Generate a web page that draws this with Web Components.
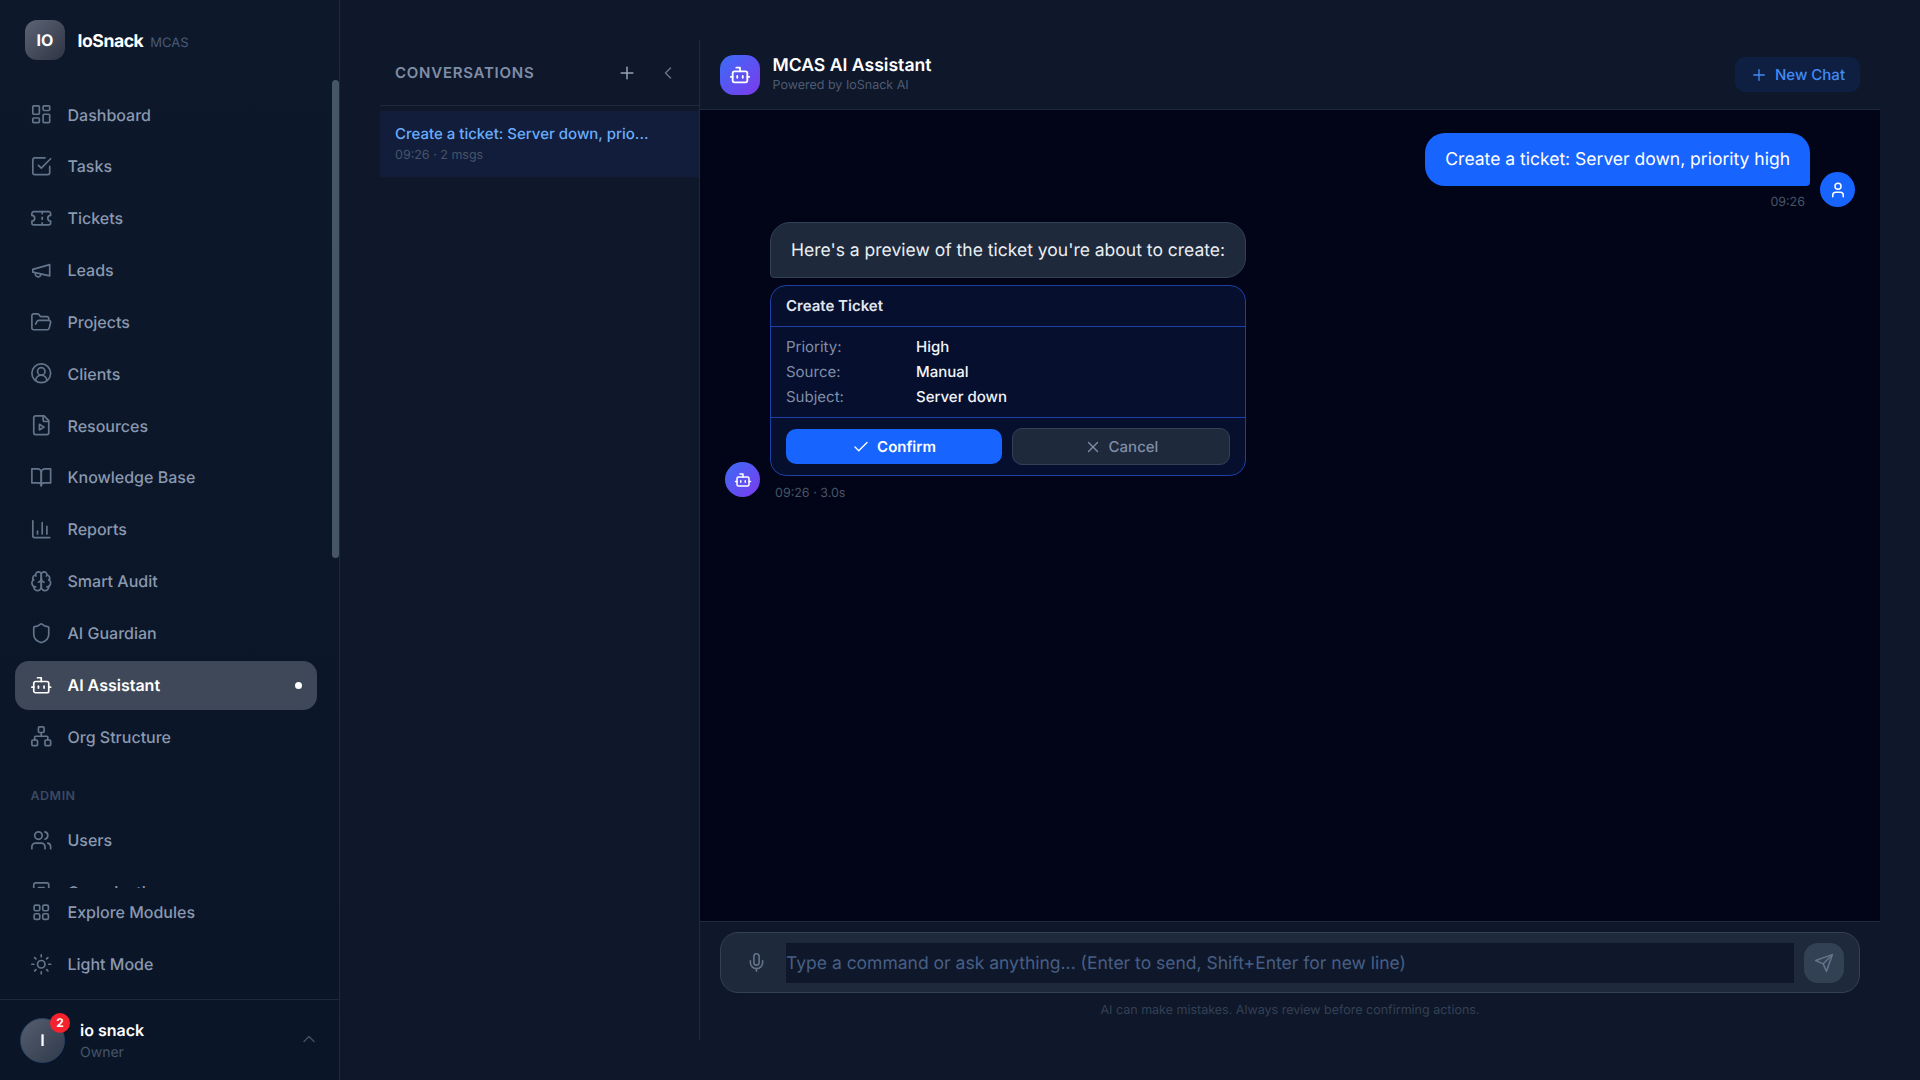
<!DOCTYPE html>
<html lang="en">
<head>
<meta charset="utf-8">
<title>MCAS AI Assistant</title>
<style>
  html, body { margin: 0; height: 100%; background: #0f172a; overflow: hidden; }
  body { font-family: Inter, "Noto Sans", sans-serif; display: flex; width: 1920px; height: 1080px; text-rendering: geometricPrecision; }
</style>
</head>
<body>
<app-sidebar></app-sidebar>
<chat-page></chat-page>

<script>
// Lucide style icon paths, by name
const ICONS = {
  dashboard: '<rect x="3" y="3" width="7" height="9" rx="1"/><rect x="14" y="3" width="7" height="5" rx="1"/><rect x="14" y="12" width="7" height="9" rx="1"/><rect x="3" y="16" width="7" height="5" rx="1"/>',
  tasks: '<path d="m9 11 3 3L22 4"/><path d="M21 12v7a2 2 0 0 1-2 2H5a2 2 0 0 1-2-2V5a2 2 0 0 1 2-2h11"/>',
  ticket: '<path d="M2 9a3 3 0 0 1 0 6v2a2 2 0 0 0 2 2h16a2 2 0 0 0 2-2v-2a3 3 0 0 1 0-6V7a2 2 0 0 0-2-2H4a2 2 0 0 0-2 2Z"/><path d="M13 5v2"/><path d="M13 17v2"/><path d="M13 11v2"/>',
  megaphone: '<path d="m3 11 18-5v12L3 14v-3z"/><path d="M11.6 16.8a3 3 0 1 1-5.8-1.6"/>',
  folder: '<path d="m6 14 1.5-2.9A2 2 0 0 1 9.24 10H20a2 2 0 0 1 1.94 2.5l-1.54 6a2 2 0 0 1-1.95 1.5H4a2 2 0 0 1-2-2V5a2 2 0 0 1 2-2h3.9a2 2 0 0 1 1.69.9l.81 1.2a2 2 0 0 0 1.67.9H18a2 2 0 0 1 2 2v2"/>',
  client: '<circle cx="12" cy="12" r="10"/><circle cx="12" cy="10" r="4"/><path d="M18 20a6 6 0 0 0-12 0"/>',
  file: '<path d="M15 2H6a2 2 0 0 0-2 2v16a2 2 0 0 0 2 2h12a2 2 0 0 0 2-2V7Z"/><path d="M14 2v4a2 2 0 0 0 2 2h4"/><path d="m10 11 5 3-5 3v-6Z"/>',
  book: '<path d="M2 3h6a4 4 0 0 1 4 4v14a3 3 0 0 0-3-3H2z"/><path d="M22 3h-6a4 4 0 0 0-4 4v14a3 3 0 0 1 3-3h7z"/>',
  chart: '<path d="M3 3v16a2 2 0 0 0 2 2h16"/><path d="M18 17V9"/><path d="M13 17V5"/><path d="M8 17v-3"/>',
  brain: '<path d="M12 5a3 3 0 1 0-5.997.125 4 4 0 0 0-2.526 5.77 4 4 0 0 0 .556 6.588A4 4 0 1 0 12 18Z"/><path d="M12 5a3 3 0 1 1 5.997.125 4 4 0 0 1 2.526 5.77 4 4 0 0 1-.556 6.588A4 4 0 1 1 12 18Z"/><path d="M15 13a4.5 4.5 0 0 1-3-4 4.5 4.5 0 0 1-3 4"/><path d="M17.599 6.5a3 3 0 0 0 .399-1.375"/><path d="M6.003 5.125A3 3 0 0 0 6.401 6.5"/><path d="M3.477 10.896a4 4 0 0 1 .585-.396"/><path d="M19.938 10.5a4 4 0 0 1 .585.396"/><path d="M6 18a4 4 0 0 1-1.967-.516"/><path d="M19.967 17.484A4 4 0 0 1 18 18"/>',
  shield: '<path d="M20 13c0 5-3.5 7.5-7.66 8.95a1 1 0 0 1-.67-.01C7.5 20.5 4 18 4 13V6a1 1 0 0 1 1-1c2 0 4.5-1.2 6.24-2.72a1.17 1.17 0 0 1 1.52 0C14.51 3.81 17 5 19 5a1 1 0 0 1 1 1z"/>',
  bot: '<path d="M12 8V4H8"/><rect x="4" y="8" width="16" height="12" rx="2"/><path d="M2 14h2"/><path d="M20 14h2"/><path d="M15 13v2"/><path d="M9 13v2"/>',
  network: '<rect x="16" y="16" width="6" height="6" rx="1"/><rect x="2" y="16" width="6" height="6" rx="1"/><rect x="9" y="2" width="6" height="6" rx="1"/><path d="M5 16v-3a1 1 0 0 1 1-1h12a1 1 0 0 1 1 1v3"/><path d="M12 12V8"/>',
  users: '<path d="M16 21v-2a4 4 0 0 0-4-4H6a4 4 0 0 0-4 4v2"/><circle cx="9" cy="7" r="4"/><path d="M22 21v-2a4 4 0 0 0-3-3.87"/><path d="M16 3.13a4 4 0 0 1 0 7.75"/>',
  building: '<rect x="4" y="2" width="16" height="20" rx="2"/><path d="M9 7h6"/><path d="M9 12h6"/><path d="M9 17h6"/>',
  grid: '<rect x="4.4" y="4.4" width="6" height="6" rx="1.6"/><rect x="13.6" y="4.4" width="6" height="6" rx="1.6"/><rect x="13.6" y="13.6" width="6" height="6" rx="1.6"/><rect x="4.4" y="13.6" width="6" height="6" rx="1.6"/>',
  sun: '<circle cx="12" cy="12" r="4"/><path d="M12 2v2"/><path d="M12 20v2"/><path d="m4.93 4.93 1.41 1.41"/><path d="m17.66 17.66 1.41 1.41"/><path d="M2 12h2"/><path d="M20 12h2"/><path d="m6.34 17.66-1.41 1.41"/><path d="m19.07 4.93-1.41 1.41"/>',
  plus: '<path d="M5 12h14"/><path d="M12 5v14"/>',
  left: '<path d="m15 18-6-6 6-6"/>',
  up: '<path d="m18 15-6-6-6 6"/>',
  check: '<path d="M20 6 9 17l-5-5"/>',
  x: '<path d="M18 6 6 18"/><path d="m6 6 12 12"/>',
  mic: '<path d="M12 2a3 3 0 0 0-3 3v7a3 3 0 0 0 6 0V5a3 3 0 0 0-3-3Z"/><path d="M19 10v2a7 7 0 0 1-14 0v-2"/><path d="M12 19v3"/>',
  send: '<path d="m22 2-7 20-4-9-9-4Z"/><path d="M22 2 11 13"/>',
  user: '<path d="M19 21v-2a4 4 0 0 0-4-4H9a4 4 0 0 0-4 4v2"/><circle cx="12" cy="7" r="4"/>'
};

// Icon component: <ui-icon name="bot" size="22.5" stroke="2">
class UiIcon extends HTMLElement {
  constructor() {
    super();
    this.attachShadow({ mode: 'open' });
  }
  connectedCallback() {
    const size = this.getAttribute('size') || 22.5;
    const stroke = this.getAttribute('stroke') || 1.8;
    this.shadowRoot.innerHTML = `
      <style>
        :host { display: inline-flex; flex: none; width: ${size}px; height: ${size}px; }
        svg { display: block; }
      </style>
      <svg width="${size}" height="${size}" viewBox="0 0 24 24" fill="none" stroke="currentColor"
        stroke-width="${stroke}" stroke-linecap="round" stroke-linejoin="round">${ICONS[this.getAttribute('name')]}</svg>`;
  }
}
customElements.define('ui-icon', UiIcon);

// One row of the side navigation
class NavItem extends HTMLElement {
  constructor() {
    super();
    this.attachShadow({ mode: 'open' });
  }
  connectedCallback() {
    const active = this.hasAttribute('active');
    this.shadowRoot.innerHTML = `
      <style>
        :host { display: flex; flex: none; align-items: center; height: 48.84px; margin-bottom: 3px; padding: 0 15px; gap: 15px;
          border-radius: 14px; font-size: 16px; font-weight: 500; color: #8a99b0; box-sizing: border-box; }
        :host([active]) { background: #3f4858; color: #fff; font-weight: 600; margin-top: .3px; height: 49.14px; margin-bottom: 2.4px; }
        ui-icon { color: #64748b; }
        :host([active]) ui-icon { color: #fff; }
        span { flex: 1; white-space: nowrap; }
        i { width: 7px; height: 7px; border-radius: 50%; background: #fff; }
      </style>
      <ui-icon name="${this.getAttribute('icon')}"></ui-icon>
      <span><slot></slot></span>
      ${active ? '<i></i>' : ''}`;
  }
}
customElements.define('nav-item', NavItem);

class AppSidebar extends HTMLElement {
  constructor() {
    super();
    this.attachShadow({ mode: 'open' });
    this.shadowRoot.innerHTML = `
      <style>
        :host { display: flex; flex-direction: column; flex: none; position: relative; width: 340px; height: 1080px; box-sizing: border-box;
          border-right: 1px solid #1e293b; background: linear-gradient(180deg, #0d182a, #0a1528); }
        .brand { display: flex; align-items: center; height: 80px; flex: none; padding-left: 25px; box-sizing: border-box; }
        .logo { width: 40px; height: 40px; border-radius: 12px; background: linear-gradient(135deg, #5d6475, #2e3443);
          color: #fff; font-weight: 700; font-size: 16px; display: flex; align-items: center; justify-content: center; }
        .name { margin-left: 12.5px; margin-top: 2px; color: #fff; font-weight: 700; font-size: 17.6px; letter-spacing: -0.45px; }
        .tag { margin-left: 7px; margin-top: 6px; color: #4a5a78; font-size: 13px; font-weight: 400; }
        nav { flex: none; height: 808px; overflow: hidden; padding: 10.2px 22px 0 15px; box-sizing: border-box; display: flex; flex-direction: column; }
        .section { flex: none; margin: 25px 0 0 15.5px; height: 27px; font-size: 12.5px; font-weight: 600; letter-spacing: 0.5px; color: #3b4a61; }
        .thumb { position: absolute; top: 80px; right: 0; width: 7px; height: 478px; border-radius: 4px; background: #475569; }
        .bottom { flex: none; height: 111px; padding: 0 22px 0 15px; box-sizing: border-box; }
        .user { flex: none; display: flex; align-items: center; height: 81px; padding: 0 20px 0 20px; border-top: 1px solid #1e293b; box-sizing: border-box; position: relative; }
        .avatar { width: 45px; height: 45px; box-sizing: border-box; border-radius: 50%; border: 1px solid #2a4468; background: linear-gradient(135deg, #565e6e, #2f3a4b);
          color: #fff; font-weight: 600; font-size: 16px; display: flex; align-items: center; justify-content: center; position: relative; }
        .badge { position: absolute; top: -6px; right: -6px; width: 20px; height: 20px; border-radius: 50%; background: #f5222d;
          color: #fff; font-size: 12px; font-weight: 700; display: flex; align-items: center; justify-content: center; }
        .who { margin-left: 15px; flex: 1; padding-top: 2px; }
        .who b { display: block; color: #fff; font-size: 16px; font-weight: 600; line-height: 22px; }
        .who small { display: block; color: #475569; font-size: 14px; line-height: 22px; margin-top: 1px; }
        .user ui-icon { color: #3f4e64; margin-top: -2px; }
      </style>
      <div class="brand"><div class="logo">IO</div><div class="name">IoSnack</div><div class="tag">MCAS</div></div>
      <nav>
        <nav-item icon="dashboard">Dashboard</nav-item>
        <nav-item icon="tasks">Tasks</nav-item>
        <nav-item icon="ticket">Tickets</nav-item>
        <nav-item icon="megaphone">Leads</nav-item>
        <nav-item icon="folder">Projects</nav-item>
        <nav-item icon="client">Clients</nav-item>
        <nav-item icon="file">Resources</nav-item>
        <nav-item icon="book">Knowledge Base</nav-item>
        <nav-item icon="chart">Reports</nav-item>
        <nav-item icon="brain">Smart Audit</nav-item>
        <nav-item icon="shield">AI Guardian</nav-item>
        <nav-item icon="bot" active>AI Assistant</nav-item>
        <nav-item icon="network">Org Structure</nav-item>
        <div class="section">ADMIN</div>
        <nav-item icon="users">Users</nav-item>
        <nav-item icon="building">Organization</nav-item>
      </nav>
      <div class="thumb"></div>
      <div class="bottom">
        <nav-item icon="grid">Explore Modules</nav-item>
        <nav-item icon="sun">Light Mode</nav-item>
      </div>
      <div class="user">
        <div class="avatar">I<span class="badge">2</span></div>
        <div class="who"><b>io snack</b><small>Owner</small></div>
        <ui-icon name="up" size="20"></ui-icon>
      </div>`;
  }
}
customElements.define('app-sidebar', AppSidebar);

// Left list of past conversations
class ConversationList extends HTMLElement {
  constructor() {
    super();
    this.attachShadow({ mode: 'open' });
    this.shadowRoot.innerHTML = `
      <style>
        :host { display: block; flex: none; width: 320px; box-sizing: border-box; border-right: 1px solid #1e293b; }
        header { display: flex; align-items: center; height: 66px; padding: 0 21.5px 0 15px; box-sizing: border-box; border-bottom: 1px solid #1e293b; }
        h2 { flex: 1; margin: 0; font-size: 15px; font-weight: 600; letter-spacing: 0.75px; color: #7f8ea7; }
        header ui-icon { color: #94a3b8; }
        .chev { margin: 0 0 0 21px; color: #64748b !important; }
        .item { margin-top: 5px; height: 66px; padding: 11px 15px 0; box-sizing: border-box; background: #111d3b; }
        .title { font-size: 15px; font-weight: 500; line-height: 24px; color: #69adfc; white-space: nowrap; }
        .meta { font-size: 12.5px; line-height: 18px; margin-top: 1px; color: #475569; }
      </style>
      <header>
        <h2>CONVERSATIONS</h2>
        <ui-icon name="plus" size="20"></ui-icon>
        <ui-icon class="chev" name="left" size="20"></ui-icon>
      </header>
      <div class="item">
        <div class="title">Create a ticket: Server down, prio...</div>
        <div class="meta">09:26 · 2 msgs</div>
      </div>`;
  }
}
customElements.define('conversation-list', ConversationList);

// Message row: side="user" or side="bot", the bubble and card come in through the slot
class ChatMessage extends HTMLElement {
  constructor() {
    super();
    this.attachShadow({ mode: 'open' });
  }
  connectedCallback() {
    const user = this.getAttribute('side') === 'user';
    this.shadowRoot.innerHTML = `
      <style>
        :host { display: flex; align-items: flex-end; gap: 10px; margin-bottom: 12px; justify-content: ${user ? 'flex-end' : 'flex-start'}; }
        .avatar { order: ${user ? 2 : 0}; width: 35px; height: 35px; margin-bottom: ${user ? 3 : 4}px; flex: none; border-radius: 50%; color: #fff;
          display: flex; align-items: center; justify-content: center;
          background: ${user ? '#1764ff' : 'linear-gradient(135deg, #3b6cf6, #7c3aed)'}; }
        .body { display: flex; flex-direction: column; align-items: ${user ? 'flex-end' : 'stretch'}; }
        .meta { font-size: 12.5px; line-height: 16px; color: #475569; margin-top: ${user ? 9 : 10}px; margin-bottom: -1px; padding: 0 5px; }
      </style>
      <div class="avatar"><ui-icon name="${user ? 'user' : 'bot'}" size="18" stroke="2"></ui-icon></div>
      <div class="body">
        <slot></slot>
        <div class="meta">${this.getAttribute('meta')}</div>
      </div>`;
  }
}
customElements.define('chat-message', ChatMessage);

class ChatBubble extends HTMLElement {
  constructor() {
    super();
    this.attachShadow({ mode: 'open' });
    this.shadowRoot.innerHTML = `
      <style>
        :host { display: block; box-sizing: border-box; padding: 12.5px 20px 13.5px; font-size: 17.5px; line-height: 27px; white-space: nowrap;
          border-radius: 20px 20px 4px 20px; background: #1764ff; color: #fff; }
        :host([bot]) { border-radius: 20px 20px 20px 4px; background: #1e293b; border: 1px solid #334155; color: #eaeff5; padding: 13.5px 20px 13.5px; }
      </style>
      <slot></slot>`;
  }
}
customElements.define('chat-bubble', ChatBubble);

// Preview of the action the assistant wants to run
class ActionCard extends HTMLElement {
  constructor() {
    super();
    this.attachShadow({ mode: 'open' });
    this.shadowRoot.innerHTML = `
      <style>
        :host { display: block; margin-top: 7px; box-sizing: border-box; border: 1px solid #1d3fa8; border-radius: 16px; background: #060f2e; font-size: 15px; }
        .head { height: 41px; padding: 0 15px 1px; display: flex; align-items: center; box-sizing: border-box; border-bottom: 1px solid #1d3fa8;
          color: #e2e8f0; font-weight: 600; }
        dl { margin: 0; padding: 6.5px 15px 8px; height: 91px; box-sizing: border-box; display: grid; grid-template-columns: 130px 1fr; grid-auto-rows: 25px; align-items: center; border-bottom: 1px solid #1d3fa8; }
        dt { color: #7f8ea7; }
        dd { margin: 0; color: #f1f5f9; font-weight: 500; }
        .actions { display: flex; gap: 10px; padding: 10px 15px; align-items: center; }
        button { flex: 1; height: 37px; box-sizing: border-box; display: flex; align-items: center; justify-content: center; gap: 7px;
          font: 500 15px Inter, sans-serif; text-rendering: geometricPrecision; border-radius: 10px; border: 1px solid #334155; background: #1e293b; color: #7f8ea7; }
        button.ok { flex: 0 0 216px; height: 35px; border: 0; background: #1764ff; color: #fff; font-weight: 600; }
      </style>
      <div class="head">Create Ticket</div>
      <dl>
        <dt>Priority:</dt><dd>High</dd>
        <dt>Source:</dt><dd>Manual</dd>
        <dt>Subject:</dt><dd>Server down</dd>
      </dl>
      <div class="actions">
        <button class="ok"><ui-icon name="check" size="18"></ui-icon>Confirm</button>
        <button><ui-icon name="x" size="18"></ui-icon>Cancel</button>
      </div>`;
  }
}
customElements.define('action-card', ActionCard);

class ChatComposer extends HTMLElement {
  constructor() {
    super();
    this.attachShadow({ mode: 'open' });
    this.shadowRoot.innerHTML = `
      <style>
        :host { display: block; flex: none; height: 119px; box-sizing: border-box; border-top: 1px solid #1e293b; padding: 10px 20px 0; }
        .box { display: flex; align-items: center; height: 61px; box-sizing: border-box; padding: 0 15px 0 15px; border: 1px solid #334155; border-radius: 18px; background: #1e293b; }
        .mic { width: 40px; margin-right: 10px; display: flex; justify-content: center; color: #64748b; flex: none; }
        .field { flex: 1; height: 40px; box-sizing: border-box; padding-top: 1px; background: #0f172a; display: flex; align-items: center; font-size: 17.5px; color: #475f85; white-space: nowrap; }
        .send { width: 40px; height: 40px; margin-left: 10px; border-radius: 14px; background: #334155; color: #64748b; display: flex; align-items: center; justify-content: center; flex: none; }
        p { margin: 8.5px 0 0; text-align: center; font-size: 12.5px; line-height: 18px; color: #334155; }
      </style>
      <div class="box">
        <div class="mic"><ui-icon name="mic" size="21"></ui-icon></div>
        <div class="field">Type a command or ask anything... (Enter to send, Shift+Enter for new line)</div>
        <div class="send"><ui-icon name="send" size="20"></ui-icon></div>
      </div>
      <p>AI can make mistakes. Always review before confirming actions.</p>`;
  }
}
customElements.define('chat-composer', ChatComposer);

class ChatPage extends HTMLElement {
  constructor() {
    super();
    this.attachShadow({ mode: 'open' });
    this.shadowRoot.innerHTML = `
      <style>
        :host { display: flex; flex: 1; padding: 40px; box-sizing: border-box; height: 1080px; min-width: 0; }
        .chat { flex: 1; display: flex; flex-direction: column; min-width: 0; }
        header { flex: none; display: flex; align-items: center; height: 70px; padding: 0 20px; box-sizing: border-box; border-bottom: 1px solid #1e293b; }
        .mark { width: 40px; height: 40px; border-radius: 14px; color: #fff; background: linear-gradient(135deg, #3b6cf6, #7c3aed); display: flex; align-items: center; justify-content: center; }
        .titles { flex: 1; margin-left: 12.5px; padding-top: 0; }
        h1 { margin: 0; font-size: 17.6px; font-weight: 600; line-height: 22px; color: #fff; }
        .sub { font-size: 12.5px; line-height: 17px; color: #4d5c73; }
        .new { width: 125px; height: 35px; border-radius: 10px; background: #0f1f42; color: #418bf7; font-size: 15px; font-weight: 500; display: flex; align-items: center; justify-content: center; gap: 7px; }
        .log { flex: 1; background: #010517; padding: 23px 25px 0 25px; min-height: 0; }
        .bot { width: 476px; }
      </style>
      <conversation-list></conversation-list>
      <section class="chat">
        <header>
          <div class="mark"><ui-icon name="bot" size="22" stroke="2"></ui-icon></div>
          <div class="titles"><h1>MCAS AI Assistant</h1><div class="sub">Powered by IoSnack AI</div></div>
          <div class="new"><ui-icon name="plus" size="18"></ui-icon>New Chat</div>
        </header>
        <div class="log">
          <chat-message side="user" meta="09:26">
            <chat-bubble>Create a ticket: Server down, priority high</chat-bubble>
          </chat-message>
          <chat-message side="bot" meta="09:26 · 3.0s">
            <div class="bot">
              <chat-bubble bot>Here's a preview of the ticket you're about to create:</chat-bubble>
              <action-card></action-card>
            </div>
          </chat-message>
        </div>
        <chat-composer></chat-composer>
      </section>`;
  }
}
customElements.define('chat-page', ChatPage);
</script>
</body>
</html>
